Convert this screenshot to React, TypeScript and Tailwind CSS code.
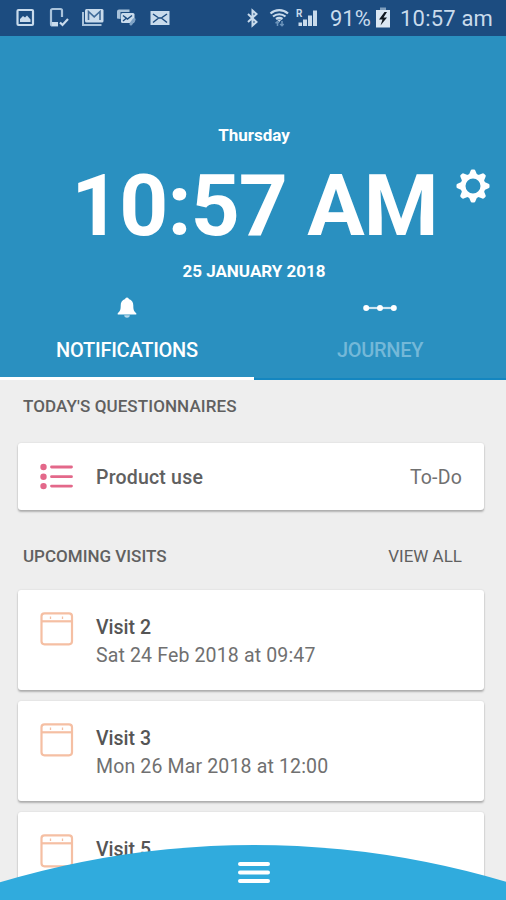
import type { ReactNode } from "react";

function StatusIcons() {
  return (
    <svg width="160" height="24" viewBox="0 0 160 24" className="ml-4" fill="#c9dbec">
      {/* picture */}
      <rect x="1.500" y="4" width="15.500" height="15" rx="1" fill="none" stroke="#c9dbec" strokeWidth="2.200" />
      <path d="M4 16v-3l3-3 2 1.500 2-2 3.500 4V16z" />
      {/* phone with check mark */}
      <path d="M46 11V4.500a1.500 1.500 0 0 0-1.500-1.500h-8A1.500 1.500 0 0 0 35 4.500V18a1.500 1.500 0 0 0 1.500 1.500H42" fill="none" stroke="#a9c3db" strokeWidth="2.200" />
      <path d="M36 16h6v4h-6z" />
      <path d="M44 16.500l2.500 2.500 5.500-6" fill="none" stroke="#c9dbec" strokeWidth="2.200" />
      {/* stacked mail */}
      <path d="M67 6v13h18.500" fill="none" stroke="#a9c3db" strokeWidth="2" />
      <rect x="69" y="3" width="18.500" height="13.500" rx="1.500" />
      <path d="M72.500 14V5.500l5.700 5.300L84 5.500V14" fill="none" stroke="#3f6a98" strokeWidth="1.600" />
      {/* mail with attachment */}
      <path d="M101 12.500V5.500a2 2 0 0 1 2-2h10.500V6h-9v7z" fill="#a9c3db" />
      <rect x="105" y="7" width="13.500" height="10" rx="1.500" />
      <path d="M107 9.500l4.500 3.500 4.500-3.500M107 15l3-2.500" fill="none" stroke="#1c4c80" strokeWidth="1.400" />
      <path d="M114 16.500l3-4c2-1.500 3.500.5 2 2.500l-3 4c-1.500 1.500-3.500 0-2-2.500z" fill="#7da1c4" />
      {/* envelope */}
      <rect x="134.500" y="5" width="19" height="14" />
      <path d="M137 8l5 3.500M151 8l-5 3.500M137 16.500l5-4M151 16.500l-5-4M142 12h4" fill="none" stroke="#1c4c80" strokeWidth="1.500" />
    </svg>
  );
}

function SignalIcons() {
  return (
    <svg width="75" height="24" viewBox="0 0 75 24" fill="#c9dbec">
      {/* bluetooth */}
      <path d="M2 8l8.500 8L6.500 19.500V4.500l4 3.500L2 16" fill="none" stroke="#c9dbec" strokeWidth="2" />
      {/* wifi */}
      <path d="M24.500 7.500c5-4.500 12.500-4.500 17.500 0M27 10.500c3.500-3 9-3 12.500 0M30 13c2-1.500 4.500-1.500 6.500 0" fill="none" stroke="#c9dbec" strokeWidth="2.200" />
      <path d="M31 13.500l2.300 2.500 2.300-2.500z" />
      <path d="M31.500 15.500v4.500M29.500 17.200l2-1.700 1.500 1.500M36 15v4.500M34 18l2 1.700 1.700-1.700" fill="none" stroke="#6c94bb" strokeWidth="1.500" />
      {/* roaming signal bars */}
      <text x="50" y="11" fontSize="10" fontWeight="700" fontFamily="Roboto, sans-serif">R</text>
      <path d="M52.500 16.500h3.500v3.500h-3.500zM57 13.500h4v6.500H57zM62 9.500h4v10.500H62zM67 4.500h4V20H67z" />
    </svg>
  );
}

function BatteryIcon() {
  return (
    <svg width="14" height="22" viewBox="0 0 14 22">
      <path d="M4 .5h6v3H4z" fill="#7f9fbe" />
      <path d="M0 3h14v17.500H0z" fill="#dbe7f3" />
      <path d="M8.500 5L3 12.500h3.500L4.500 18.500 11 10.500H7.500L11 5z" fill="#101820" />
    </svg>
  );
}

function GearIcon() {
  return (
    <svg width="34" height="34" viewBox="-17 -17 34 34" fill="#fff">
      <circle r="10" fill="none" stroke="#fff" strokeWidth="5" />
      {[0, 45, 90, 135, 180, 225, 270, 315].map((a) => (
        <path key={a} transform={`rotate(${a})`} d="M-4.200-11L-2.300-15.500Q-2-16.500-1-16.500H1Q2-16.500 2.300-15.500L4.200-11z" />
      ))}
    </svg>
  );
}

function BellIcon() {
  return (
    <svg width="20" height="22" viewBox="0 0 20 22" fill="#fff">
      <path d="M10 0.500c1.200 0 1.700.8 1.800 1.600 3.200.9 4.500 3.300 4.500 6.400 0 4.200.6 6 3 7.700v1.200H.7v-1.200c2.400-1.700 3-3.500 3-7.700 0-3.100 1.300-5.500 4.500-6.400.1-.8.6-1.600 1.800-1.600z" />
      <path d="M7.200 18.200h5.600c0 1.500-1 2.500-2.800 2.500s-2.800-1-2.800-2.500z" fill="#b5d8ea" />
    </svg>
  );
}

function JourneyIcon() {
  return (
    <svg width="34" height="8" viewBox="0 0 34 8" fill="#fff">
      <path d="M3 4h28" stroke="#cfe6f2" strokeWidth="2.200" />
      <circle cx="3.200" cy="4" r="3" />
      <circle cx="17" cy="4" r="3" />
      <circle cx="30.800" cy="4" r="3" />
    </svg>
  );
}

function ListIcon() {
  return (
    <svg width="34" height="28" viewBox="0 0 34 28" fill="#e3688a">
      <circle cx="3.500" cy="4" r="3.200" />
      <circle cx="3.500" cy="13.700" r="3.200" />
      <circle cx="3.500" cy="23.100" r="3.200" />
      <path d="M11.500 4h20M11.500 13.700h20M11.500 23.100h20" stroke="#e3688a" strokeWidth="2.800" strokeLinecap="round" />
    </svg>
  );
}

function CalendarIcon() {
  return (
    <svg width="34" height="34" viewBox="0 0 34 34" fill="none" stroke="#f5bfa3" strokeWidth="2.200">
      <rect x="1.500" y="1.300" width="30.500" height="31" rx="3" />
      <path d="M1.500 9.300h30.500" />
      <path d="M10.500 4.500v2.500M22.500 4.500v2.500" strokeWidth="1.300" />
    </svg>
  );
}

function Card({ children, className }: { children: ReactNode; className: string }) {
  return (
    <div className={`flex shrink-0 rounded-[3px] bg-white px-[22px] shadow-[0_2px_2px_rgba(0,0,0,0.25),0_0_2px_rgba(0,0,0,0.12)] ${className}`}>
      {children}
    </div>
  );
}

function Visit({ name, when }: { name: string; when: string }) {
  return (
    <Card className="h-[100px] pt-[22px]">
      <CalendarIcon />
      <div className="ml-[22px] pt-[2px] text-[19.5px] leading-7">
        <div className="font-medium text-[#555]">{name}</div>
        <div className="tracking-[0.15px] text-[#707070]">{when}</div>
      </div>
    </Card>
  );
}

export default function App() {
  return (
    <div className="relative flex h-[900px] w-[506px] flex-col overflow-hidden bg-[#eee] font-[Roboto,sans-serif]">
      <div className="flex h-9 shrink-0 items-center bg-[#1c4c80] text-[22px] text-[#c9dbec]">
        <StatusIcons />
        <div className="ml-[70px] flex">
          <SignalIcons />
        </div>
        <span className="ml-[9px] w-[43px] pt-[2px] leading-6">91%</span>
        <span className="ml-[3px]"><BatteryIcon /></span>
        <span className="ml-[10px] whitespace-nowrap pt-[2px] leading-6 tracking-[0.2px]">10:57 am</span>
      </div>

      <header className="flex h-[344px] shrink-0 flex-col bg-[#2a90c0] pt-[89px] text-center text-white">
        <div className="pl-[2px] text-[17px] font-bold leading-5">Thursday</div>
        <div className="mt-[18px] grid grid-cols-[1fr_auto_1fr]">
          <span />
          <div className="pl-[3px] text-[85.500px] font-bold leading-[86px] tracking-[-0.9px]">10:57 AM</div>
          <div className="flex justify-end pr-4 pt-[6px]"><GearIcon /></div>
        </div>
        <div className="mt-3 pl-[2px] text-[17px] font-bold leading-5">25 JANUARY 2018</div>
        <nav className="grid flex-1 grid-cols-[254px_252px] text-[20px] leading-6">
          <div className="flex flex-col items-center border-b-[3px] border-white pt-4">
            <div className="h-[41px]"><BellIcon /></div>
            <div className="font-medium tracking-[-0.25px]">NOTIFICATIONS</div>
          </div>
          <div className="flex flex-col items-center border-b-2 border-[#1486c0] pt-[23px]">
            <div className="h-[34px]"><JourneyIcon /></div>
            <div className="font-medium tracking-[-0.3px] text-[#74b8d8]">JOURNEY</div>
          </div>
        </nav>
      </header>

      <main className="flex min-h-0 flex-1 flex-col pl-[18px] pr-[22px] pt-4">
        <h2 className="pl-[5px] text-[17px] font-medium leading-5 tracking-[0.1px] text-[#606060]">TODAY'S QUESTIONNAIRES</h2>
        <Card className="mt-[27px] h-[67px] items-center">
          <ListIcon />
          <div className="ml-[22px] flex-1 pt-[2px] text-[19.5px] font-medium tracking-[0.2px] text-[#606060]">Product use</div>
          <div className="pt-[2px] text-[19.5px] tracking-[0.2px] text-[#707070]">To-Do</div>
        </Card>
        <div className="mb-6 mt-9 flex justify-between pl-[5px] pr-[22px] text-[17px] leading-5 text-[#606060]">
          <h2 className="font-medium">UPCOMING VISITS</h2>
          <span>VIEW ALL</span>
        </div>
        <div className="flex flex-col gap-[11px]">
          <Visit name="Visit 2" when="Sat 24 Feb 2018 at 09:47" />
          <Visit name="Visit 3" when="Mon 26 Mar 2018 at 12:00" />
          <Visit name="Visit 5" when="" />
        </div>
      </main>

      <div className="absolute inset-x-0 bottom-0 h-14 overflow-hidden">
        <svg width="506" height="56" viewBox="0 0 506 56">
          <circle cx="254" cy="884" r="883" fill="#30abdd" />
          <path d="M240 20h28M240 28.500h28M240 37h28" stroke="#fff" strokeWidth="4" strokeLinecap="round" />
        </svg>
      </div>
    </div>
  );
}
